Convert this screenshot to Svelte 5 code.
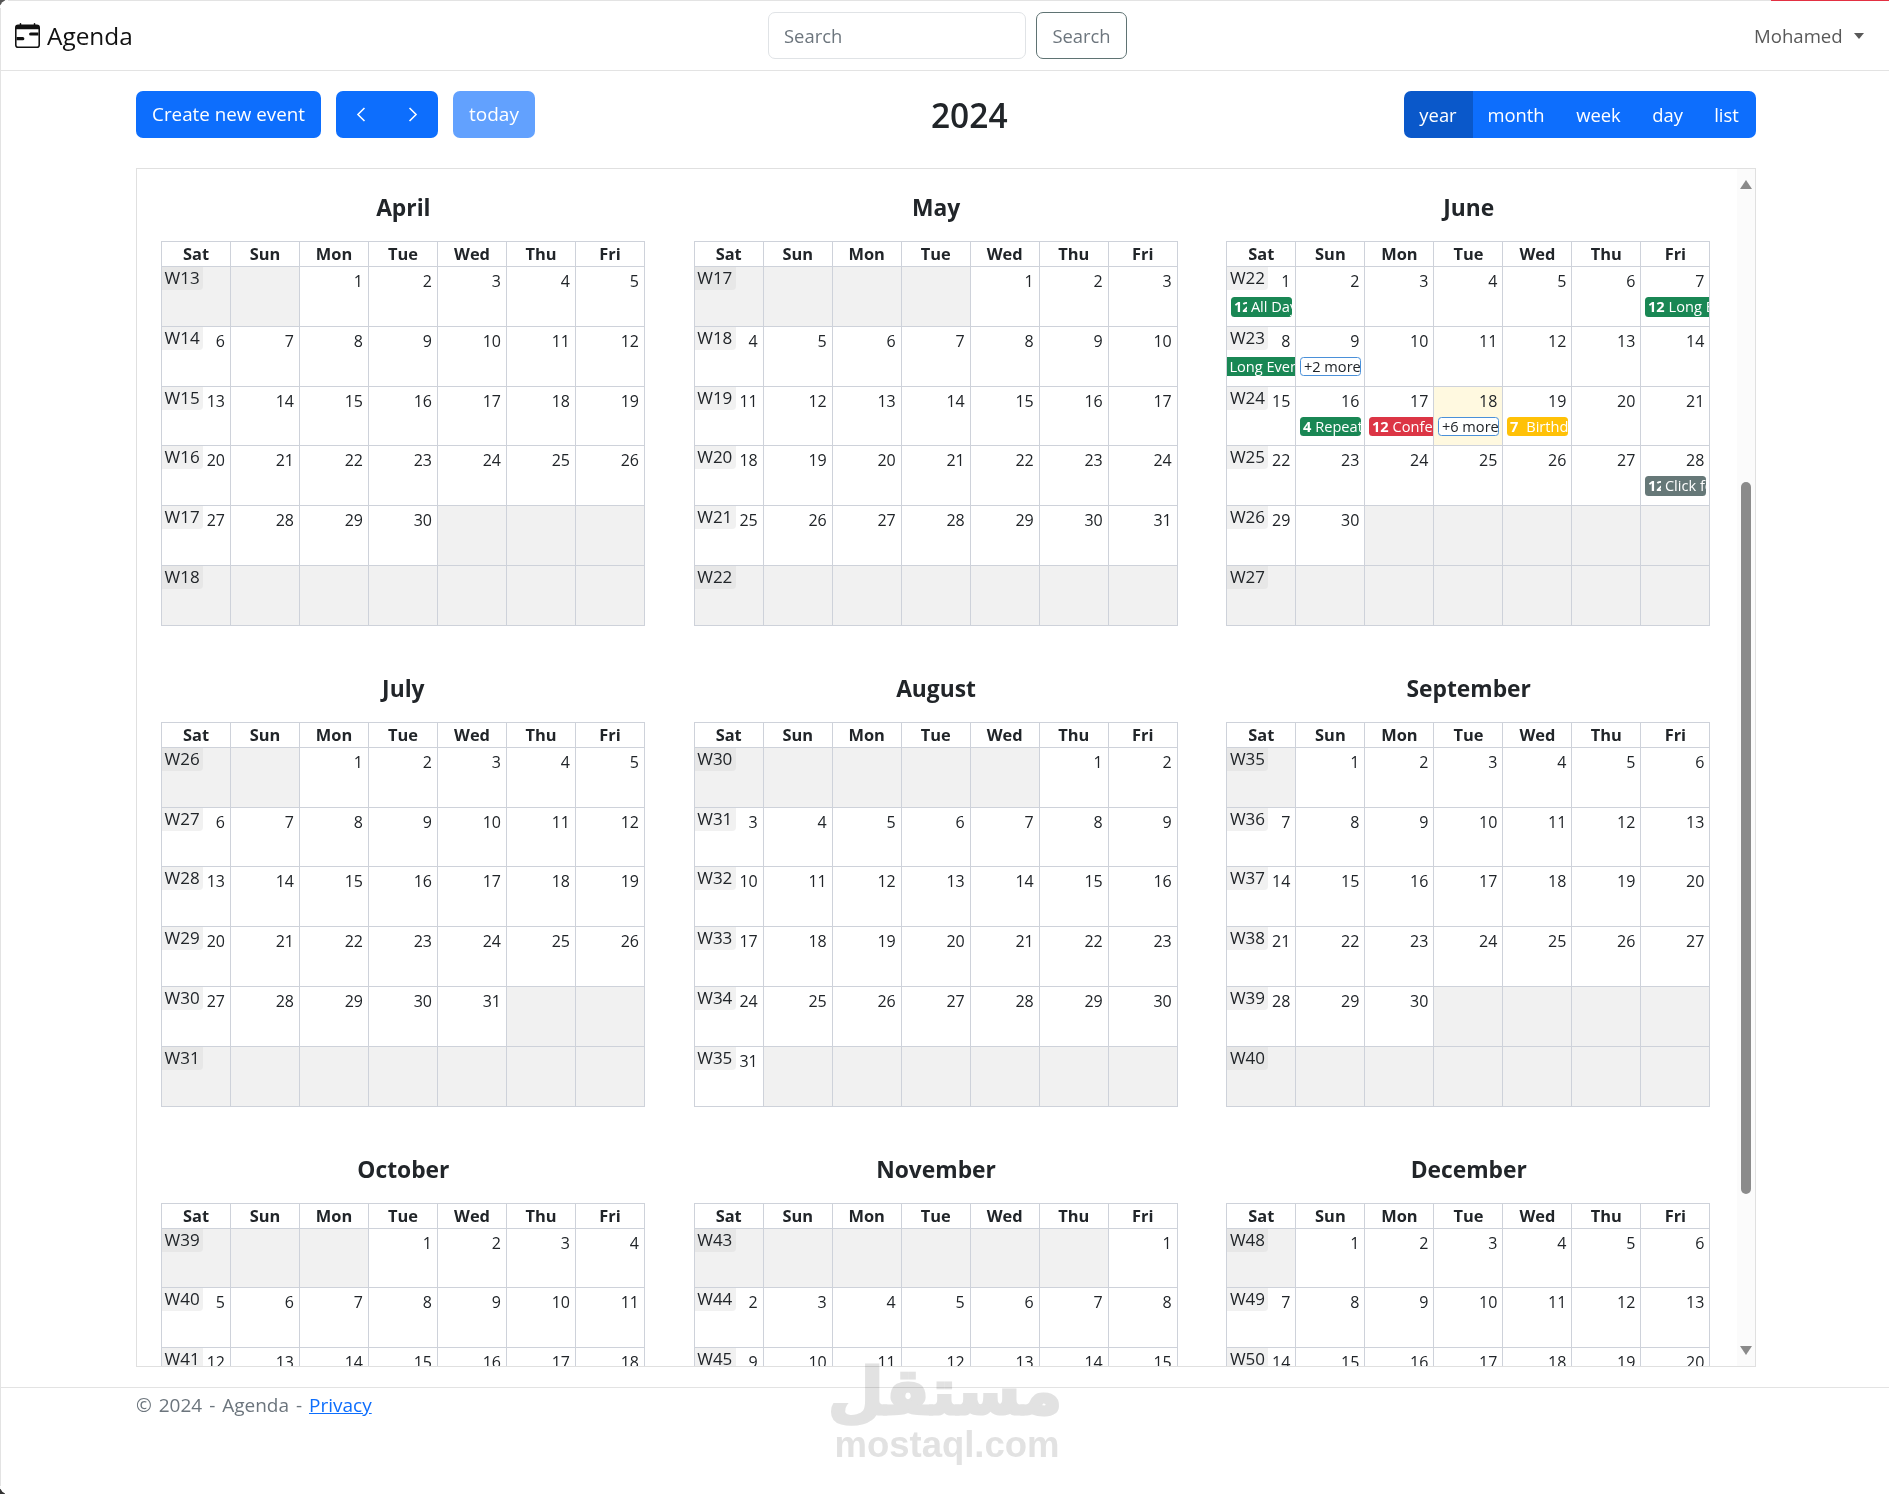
<script>
  const dows = ['Sat','Sun','Mon','Tue','Wed','Thu','Fri'];
  const months = [
    ['April',30,2,13],['May',31,4,17],['June',30,0,22],
    ['July',31,2,26],['August',31,5,30],['September',30,1,35],
    ['October',31,3,39],['November',30,6,43],['December',31,1,48]
  ];
  const events = {
    'June-1':[{t:'12',x:'All Day',c:'green',clip:1}],
    'June-7':[{t:'12',x:'Long Event',c:'green',open:1}],
    'June-8':[{x:'Long Event',c:'green',cont:1}],
    'June-9':[{x:'+2 more',c:'more'}],
    'June-16':[{t:'4',x:'Repeating',c:'green'}],
    'June-17':[{t:'12',x:'Conference',c:'red',open:1}],
    'June-18':[{x:'+6 more',c:'more'}],
    'June-19':[{t:'7',x:'Birthday Party',c:'yellow'}],
    'June-28':[{t:'12',x:'Click for Google',c:'gray',clip:1}]
  };
  function weeks(m){
    const [name,len,start,wk] = m;
    const rows = [];
    let d = 1 - start;
    for(let r=0;r<6;r++){
      const cells=[];
      for(let c=0;c<7;c++){
        cells.push(d>=1&&d<=len?d:null);
        d++;
      }
      rows.push({w:wk+r,cells});
    }
    return rows;
  }
  const data = months.map(m=>({name:m[0],rows:weeks(m)}));
</script>

<div class="page">
  <i class="edge-top"></i><i class="edge-red"></i><i class="edge-left"></i>
  <i class="corner tl"></i><i class="corner bl"></i>

  <nav class="navbar">
    <a class="brand" href="#home">
      <svg class="logo" viewBox="0 0 16 16" fill="currentColor" aria-hidden="true">
        <path d="M9 7a1 1 0 0 1 1-1h5v2h-5a1 1 0 0 1-1-1zM1 9h4a1 1 0 0 1 0 2H1V9z"/>
        <path d="M3.5 0a.5.5 0 0 1 .5.5V1h8V.5a.5.5 0 0 1 1 0V1h1a2 2 0 0 1 2 2v11a2 2 0 0 1-2 2H2a2 2 0 0 1-2-2V3a2 2 0 0 1 2-2h1V.5a.5.5 0 0 1 .5-.5zM1 4v10a1 1 0 0 0 1 1h12a1 1 0 0 0 1-1V4H1z"/>
      </svg>
      <span>Agenda</span>
    </a>
    <form class="search">
      <input placeholder="Search" aria-label="Search" />
      <button type="button">Search</button>
    </form>
    <div class="user">Mohamed<i class="caret"></i></div>
  </nav>

  <main class="main">
    <div class="toolbar">
      <div class="tools">
        <button class="btn create">Create new event</button>
        <div class="pager">
          <button class="btn ar" aria-label="prev">
            <svg viewBox="0 0 16 16" fill="none" stroke="currentColor" stroke-width="1.3"><path d="M10.500 2.500 5 8l5.500 5.500"/></svg>
          </button>
          <button class="btn ar" aria-label="next">
            <svg viewBox="0 0 16 16" fill="none" stroke="currentColor" stroke-width="1.3"><path d="M5.500 2.500 11 8l-5.500 5.500"/></svg>
          </button>
        </div>
        <button class="btn today">today</button>
      </div>
      <h2 class="title">2024</h2>
      <div class="views">
        <button class="btn v active">year</button>
        <button class="btn v">month</button>
        <button class="btn v">week</button>
        <button class="btn v">day</button>
        <button class="btn v">list</button>
      </div>
    </div>

    <div class="box">
      <div class="grid">
        {#each data as m}
          <section class="month">
            <h3>{m.name}</h3>
            <table>
              <thead><tr>{#each dows as d}<th>{d}</th>{/each}</tr></thead>
              <tbody>
                {#each m.rows as r}
                  <tr>
                    {#each r.cells as d, i}
                      <td class:off={d===null} class:now={m.name==='June'&&d===18}>
                        {#if i===0}<span class="wk">W{r.w}</span>{/if}
                        {#if d!==null}<span class="num">{d}</span>{/if}
                        {#each events[m.name+'-'+d] ?? [] as e}
                          <div class="ev {e.c}" class:open={e.open} class:cont={e.cont}>
                            {#if e.t}<b class:clip={e.clip}>{e.t}</b>{/if}<span>{e.x}</span>
                          </div>
                        {/each}
                      </td>
                    {/each}
                  </tr>
                {/each}
              </tbody>
            </table>
          </section>
        {/each}
      </div>
      <div class="sb">
        <i class="up"></i><i class="thumb"></i><i class="down"></i>
      </div>
    </div>
  </main>

  <footer class="footer">
    <div>© 2024 - Agenda - <a href="#privacy">Privacy</a></div>
  </footer>

  <div class="mark" aria-hidden="true">
    <div class="ar-mark" lang="ar" dir="rtl">مستقل</div>
    <div class="en-mark">mostaql.com</div>
  </div>
</div>

<style>
  :global(body){margin:0;background:#fff;}
  .page{position:relative;width:1889px;height:1494px;overflow:hidden;background:#fff;color:#212529;
    font-family:"Open Sans","Noto Sans",sans-serif;font-size:18.4px;line-height:1.5;}
  .edge-top{position:absolute;left:0;top:0;width:100%;height:1px;background:#e3e3e3;}
  .edge-red{position:absolute;right:0;top:0;width:118px;height:1px;background:#e33042;}
  .edge-left{position:absolute;left:0;top:0;bottom:0;width:1px;background:#e3e3e3;}
  .corner{position:absolute;left:0;width:8px;height:8px;background:#fff;}
  .corner.tl{top:0;border-top-left-radius:8px;box-shadow:-3px -3px 0 0 #555;}
  .corner.bl{bottom:0;border-bottom-left-radius:8px;box-shadow:-3px 3px 0 0 #333;}

  .navbar{position:relative;height:70px;border-bottom:1.2px solid #e3e3e3;box-sizing:content-box;}
  .brand{position:absolute;left:15px;top:22px;display:flex;align-items:center;gap:7px;color:#111;text-decoration:none;font-size:24.4px;line-height:27px;}
  .logo{width:25px;height:25px;}
  .search{display:flex;gap:10px;position:absolute;left:768px;top:12px;}
  .search input{width:258px;height:47px;box-sizing:border-box;border:1.200px solid #e0e3e6;border-radius:7px;padding:0 15px;font:inherit;color:#212529;outline:none;}
  .search input::placeholder{color:#6c757d;opacity:1;}
  .search button{width:91px;height:47px;box-sizing:border-box;border:1.200px solid #5f7373;border-radius:7px;background:#fff;color:#6c757d;font:inherit;padding:0;}
  .user{position:absolute;left:1754px;top:22px;color:#595959;line-height:27px;display:flex;align-items:center;font-size:18.600px;}
  .caret{width:0;height:0;margin-left:11px;border-left:5.800px solid transparent;border-right:5.800px solid transparent;border-top:6.500px solid #595959;}

  .main{margin:20px 133.500px 0 136px;}
  .toolbar{display:flex;align-items:center;justify-content:space-between;height:47px;position:relative;}
  .tools{display:flex;gap:15px;}
  .btn{height:47px;box-sizing:border-box;border:0;border-radius:7px;background:#0d6efd;color:#fff;font:inherit;padding:0 15px;white-space:nowrap;}
  .create{width:185px;padding:0;font-size:18.800px;}
  .pager{display:flex;}
  .btn.ar{width:51px;padding:0;display:flex;align-items:center;justify-content:center;}
  .btn.ar svg{width:19px;height:19px;}
  .btn.ar:first-child{border-radius:7px 0 0 7px;}
  .btn.ar:last-child{border-radius:0 7px 7px 0;}
  .today{background:#62a1fe;width:82px;padding:0;font-size:19px;}
  .title{position:absolute;left:0;right:0;top:1px;margin:0;text-align:center;font-size:33.500px;font-weight:600;line-height:47px;padding-left:47px;}
  .views{display:flex;border-radius:7px;overflow:hidden;width:352px;}
  .btn.v{border-radius:0;padding:0;}
  .btn.v:nth-child(1){width:69px;background:#0a58ca;}
  .btn.v:nth-child(2){width:87px;}
  .btn.v:nth-child(3){width:78px;}
  .btn.v:nth-child(4){width:60px;}
  .btn.v:nth-child(5){width:58px;}

  .box{position:relative;margin-top:30px;height:1199.300px;box-sizing:border-box;border:1.200px solid #e0e0e0;overflow:hidden;}
  .grid{display:grid;grid-template-columns:repeat(3,532.700px);}
  .month{padding:25px 24px 24px;box-sizing:border-box;}
  .month h3{margin:0 0 19px;font-size:22.800px;line-height:28px;font-weight:700;text-align:center;}
  table{width:484px;table-layout:fixed;border-collapse:collapse;font-size:16px;line-height:1.5;}
  th,td{border:1.200px solid #ced2da;padding:0;}
  th{height:24px;font-weight:700;text-align:center;line-height:22px;font-size:16.400px;}
  td{height:58.800px;vertical-align:top;position:relative;text-align:right;}
  td.off{background:rgba(208,208,208,.3);}
  td.now{background:#fff9e0;}
  .wk{position:absolute;left:0;top:0;width:41px;height:23px;box-sizing:border-box;padding-left:2.500px;text-align:left;background:rgba(208,208,208,.3);border-radius:0 0 4px 0;line-height:21px;font-size:17px;}
  .num{display:block;padding:3px 5px 0 0;line-height:22px;height:26px;box-sizing:border-box;}
  .ev{position:absolute;left:3.500px;right:3.500px;top:30px;height:19.500px;box-sizing:border-box;overflow:hidden;white-space:nowrap;text-align:left;font-size:14.600px;line-height:19px;border-radius:3.500px;color:#fff;padding-left:3px;}
  .ev b{font-weight:700;margin-right:4px;}
  .ev b.clip{display:inline-block;width:13px;overflow:hidden;vertical-align:top;}
  .ev.open{right:0;border-radius:3.500px 0 0 3.500px;}
  .ev.cont{left:0;right:0;border-radius:0;padding-left:2px;}
  .green{background:#198754;}
  .red{background:#dc3545;}
  .yellow{background:#ffc107;}
  .yellow b{margin-right:8px;}
  .gray{background:#667878;}
  .more{background:#fff;color:#212529;border:1.200px solid #4a90d9;padding-left:3px;line-height:17px;text-align:center;}

  .sb{position:absolute;right:0;top:0;bottom:0;width:18px;background:#fbfbfb;}
  .sb i{position:absolute;display:block;}
  .up{left:3px;top:11px;border-left:6px solid transparent;border-right:6px solid transparent;border-bottom:9px solid #8a8a8a;}
  .down{left:3px;bottom:11px;border-left:6px solid transparent;border-right:6px solid transparent;border-top:9px solid #8a8a8a;}
  .thumb{left:4px;width:10px;top:313px;height:712px;border-radius:5px;background:#8b8b8b;}

  .footer{margin-top:20px;border-top:1.200px solid #e3e3e3;padding:3px 0 0 136px;color:#6c757d;line-height:28px;font-size:19px;word-spacing:2px;}
  .footer a{color:#0d6efd;text-decoration:underline;}

  .mark{position:absolute;left:836px;top:1352px;width:226px;pointer-events:none;text-align:center;color:#e2e2e2;mix-blend-mode:multiply;}
  .ar-mark{font-family:"DejaVu Sans",sans-serif;font-weight:700;font-size:64px;line-height:80px;-webkit-text-stroke:3px #e2e2e2;}
  .en-mark{font-family:"Liberation Sans",sans-serif;font-weight:700;font-size:36.500px;line-height:36px;margin:-5px 0 0 -4px;}
</style>
